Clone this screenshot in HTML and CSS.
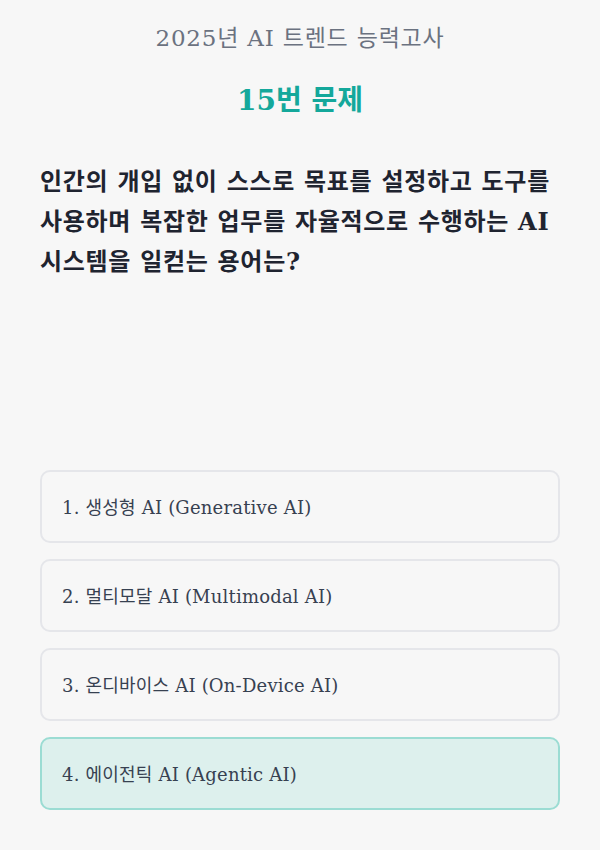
FILE: index.html
```html
<!DOCTYPE html>
<html lang="ko">
<head>
<meta charset="utf-8">
<link rel="stylesheet" href="styles.css">
</head>
<body>
<main class="quiz">
  <h2 class="exam-title">2025년 AI 트렌드 능력고사</h2>
  <h1 class="q-number">15번 문제</h1>
  <p class="question">인간의 개입 없이 스스로 목표를 설정하고 도구를 사용하며 복잡한 업무를 자율적으로 수행하는 AI 시스템을 일컫는 용어는?</p>
  <ul class="options">
    <li class="option">1. 생성형 AI (Generative AI)</li>
    <li class="option">2. 멀티모달 AI (Multimodal AI)</li>
    <li class="option">3. 온디바이스 AI (On-Device AI)</li>
    <li class="option selected">4. 에이전틱 AI (Agentic AI)</li>
  </ul>
</main>
</body>
</html>
```
FILE: styles.css
```css
html, body {
  margin: 0;
  padding: 0;
  background: #f7f7f7;
}
body {
  font-family: "DejaVu Serif", "Noto Sans CJK KR", serif;
  word-break: keep-all;
}
.quiz {
  width: 600px;
  height: 850px;
  box-sizing: border-box;
  padding: 20px 40px 0;
  display: flex;
  flex-direction: column;
}
.exam-title {
  margin: 0;
  text-align: center;
  font-size: 23px;
  line-height: 36px;
  font-weight: normal;
  letter-spacing: 0.8px;
  color: #6b7280;
}
.q-number {
  margin: 25px 0 0;
  text-align: center;
  font-size: 28px;
  line-height: 40px;
  font-weight: bold;
  color: #14a89b;
}
.question {
  margin: 41px 0 0;
  font-size: 24px;
  line-height: 40px;
  font-weight: bold;
  letter-spacing: 0.7px;
  color: #1f2430;
}
.options {
  list-style: none;
  margin: 188px 0 0;
  padding: 0;
  display: flex;
  flex-direction: column;
  gap: 16px;
}
.option {
  height: 73px;
  flex: none;
  box-sizing: border-box;
  border: 2px solid #e5e6ea;
  border-radius: 10px;
  padding: 0 20px 2px;
  display: flex;
  align-items: center;
  font-size: 18px;
  letter-spacing: 0.2px;
  color: #374151;
}
.option.selected {
  background: #ddf0ed;
  border-color: #9bdcd3;
}
```
